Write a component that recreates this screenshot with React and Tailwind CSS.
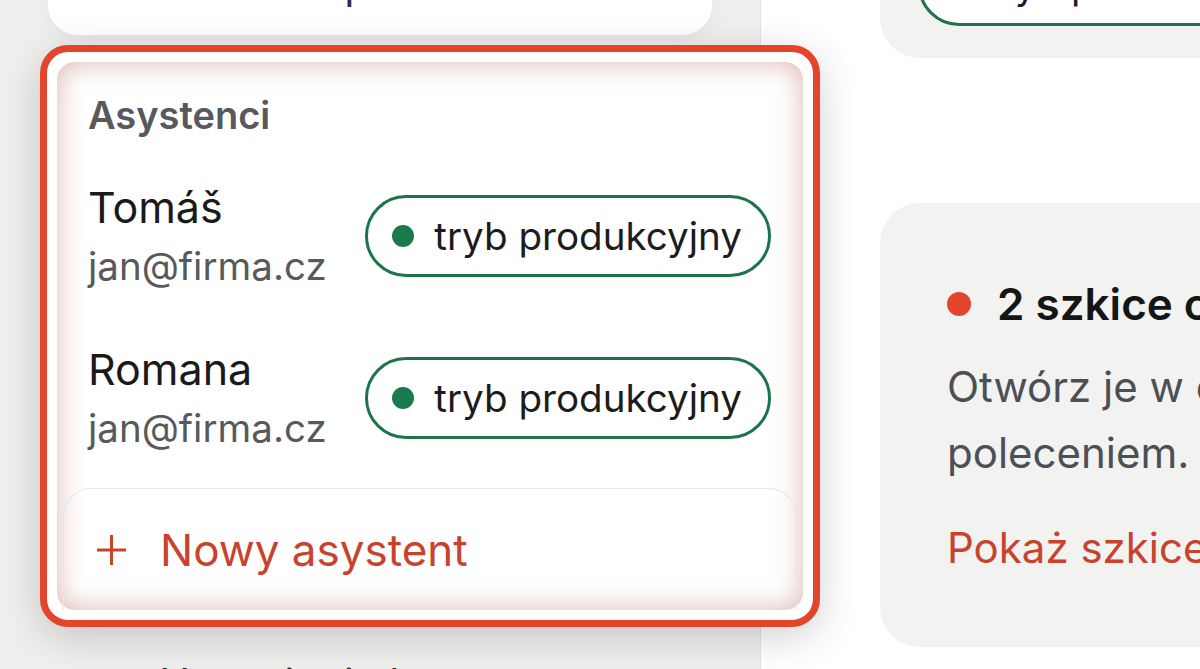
import React from 'react';
import { User } from 'lucide-react';

// Asystenci w panelu bocznym
const ASSISTANTS = [
  { name: 'Tomáš', email: 'jan@firma.cz' },
  { name: 'Romana', email: 'jan@firma.cz' },
];

const StatusPill = () => (
  <div className="flex shrink-0 items-center gap-[20px] h-[82px] pl-[24px] pr-[26px] rounded-full border-[3px] border-[#1d7449] bg-white">
    <span className="w-[22px] h-[22px] rounded-full bg-[#1a7a4e]" />
    <span className="text-[38.6px] leading-none text-[#1c1c1c] whitespace-nowrap">tryb produkcyjny</span>
  </div>
);

const PlusIcon = () => (
  <svg width="31" height="32" viewBox="0 0 31 32" fill="none">
    <path d="M15.5 1v30M1 16h29" stroke="#c8432c" strokeWidth="3" />
  </svg>
);

export default function App() {
  return (
    <div className="w-[1200px] h-[669px] overflow-hidden flex bg-white font-['Inter','Noto_Sans',sans-serif]">
      {/* Panel boczny */}
      <div className="relative z-10 w-[761px] shrink-0 bg-[#efefed] border-r border-[#e2e2e0] flex flex-col pl-[48px] pr-[48px]">
        <div className="h-[35px] shrink-0 bg-white rounded-b-[30px] shadow-[0_4px_18px_rgba(0,0,0,0.05)] flex items-end pl-[66px] pb-[25px] overflow-hidden">
          <span className="text-[42px] leading-[1.21] text-[#26324a] whitespace-nowrap">Ustawienia planu</span>
        </div>

        {/* Wyróżniona karta */}
        <div className="mt-[10px] -ml-[8px] w-[780px] h-[582px] shrink-0 rounded-[28px] border-[7px] border-[#e2452b] bg-white p-[10px] shadow-[0_10px_40px_rgba(0,0,0,0.18)]">
          <div className="h-full rounded-[18px] shadow-[inset_0_0_28px_rgba(180,90,85,0.45)] flex flex-col">
            <div className="pt-[30px] pl-[31px] text-[38px] leading-[46px] font-semibold text-[#58595d]">Asystenci</div>
            <div className="mt-[17px]">
              {ASSISTANTS.map((a) => (
                <div key={a.name} className="flex items-center justify-between py-[22px] pl-[31px] pr-[32px]">
                  <div>
                    <div className="text-[43px] leading-[60px] text-[#1a1a1a]">{a.name}</div>
                    <div className="text-[38.5px] leading-[58px] text-[#58595c]">{a.email}</div>
                  </div>
                  <StatusPill />
                </div>
              ))}
            </div>
            <div className="mt-[9px] flex-1 mx-[6px] rounded-t-[28px] border-t border-x border-[#e6e6e4] flex items-center pl-[32px] gap-[33px]">
              <PlusIcon />
              <span className="text-[44px] leading-none text-[#c8432c]">Nowy asystent</span>
            </div>
          </div>
        </div>

        <div className="mt-[32px] flex items-center gap-[30px] pl-[47px] shrink-0">
          <User size={34} color="#333" strokeWidth={2} />
          <span className="text-[42px] leading-[50px] text-[#222]">Ustawienia konta</span>
        </div>
      </div>

      {/* Obszar główny */}
      <div className="flex-1 overflow-hidden pl-[119px] flex flex-col">
        <div className="h-[58px] w-[600px] shrink-0 bg-[#f2f2f0] rounded-bl-[40px] flex items-end pl-[38px] pb-[32px] overflow-hidden">
          <StatusPill />
        </div>

        <div className="mt-[145px] h-[444px] w-[700px] shrink-0 bg-[#f2f2f0] rounded-l-[40px] pl-[67px] pt-[73px]">
          <div className="flex items-center gap-[26px]">
            <span className="w-[24px] h-[24px] rounded-full bg-[#e2452b] shrink-0" />
            <span className="text-[44px] leading-[56px] font-semibold text-[#151515] whitespace-nowrap">2 szkice czekają na przegląd</span>
          </div>
          <div className="mt-[22px] text-[42px] leading-[66px] text-[#4b4f56] whitespace-nowrap">
            <div>Otwórz je w edytorze i zatwierdź</div>
            <div>poleceniem.</div>
          </div>
          <div className="mt-[29px] text-[42px] leading-[66px] text-[#c8432c] whitespace-nowrap">Pokaż szkice</div>
        </div>
      </div>
    </div>
  );
}
